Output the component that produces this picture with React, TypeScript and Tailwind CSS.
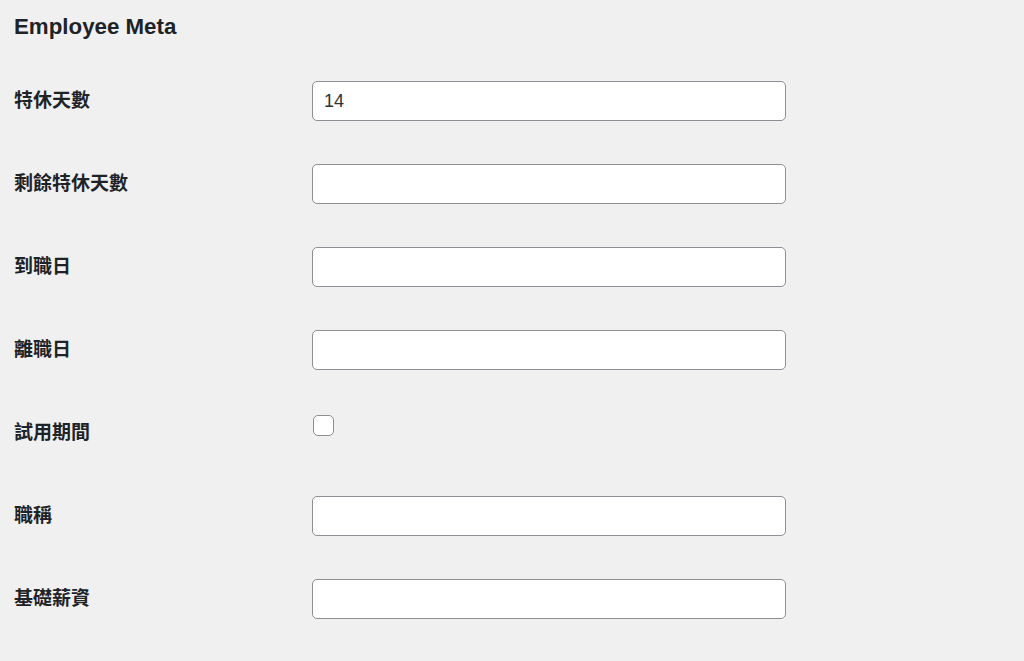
const fields = [
  { label: "特休天數", type: "text", value: "14" },
  { label: "剩餘特休天數", type: "text", value: "" },
  { label: "到職日", type: "text", value: "" },
  { label: "離職日", type: "text", value: "" },
  { label: "試用期間", type: "checkbox", value: "" },
  { label: "職稱", type: "text", value: "" },
  { label: "基礎薪資", type: "text", value: "" },
];

const font = {
  fontFamily:
    '-apple-system, "Liberation Sans", "Noto Sans CJK TC", sans-serif',
};

export default function App() {
  return (
    <div
      className="min-h-[661px] bg-[#f0f0f1] pl-[14px] text-[#1d2327]"
      style={font}
    >
      <h2 className="pt-[14px] text-[22.3px] font-semibold leading-[26px]">
        Employee Meta
      </h2>

      <div className="mt-[41px] flex flex-col">
        {fields.map((f) => (
          <div key={f.label} className="flex h-[83px] items-start">
            <label className="w-[298px] pt-[9px] text-[19px] font-semibold leading-[22px] text-[#1d2327]">
              {f.label}
            </label>
            {f.type === "checkbox" ? (
              <input
                type="checkbox"
                className="ml-px mt-[2px] h-[21px] w-[21px] appearance-none rounded-[5px] border border-[#8c8f94] bg-white"
              />
            ) : (
              <input
                type="text"
                defaultValue={f.value}
                className="h-[40px] w-[474px] rounded-[5px] border border-[#8c8f94] bg-white px-[11px] text-[18px] text-[#2c3338] outline-none"
              />
            )}
          </div>
        ))}
      </div>
    </div>
  );
}
